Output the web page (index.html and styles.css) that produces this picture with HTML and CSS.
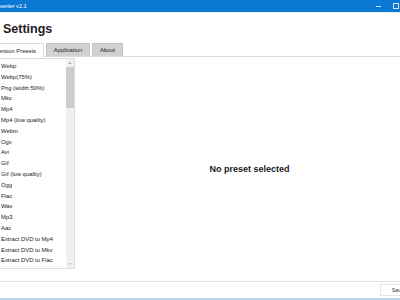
FILE: index.html
```html
<!DOCTYPE html>
<html>
<head>
<meta charset="utf-8">
<link rel="stylesheet" href="styles.css">
</head>
<body>
<div class="window">
  <div class="titlebar">
    <span class="title">Converter v2.1</span>
    <div class="controls">
      <span class="min"></span>
      <span class="max"></span>
      <span class="close"></span>
    </div>
  </div>
  <h1 class="heading">Settings</h1>
  <div class="tabs">
    <div class="tab active">Conversion Presets</div>
    <div class="tab">Application</div>
    <div class="tab">About</div>
  </div>
  <div class="body">
    <div class="listbox">
      <ul class="items">
        <li>Webp</li>
        <li>Webp(75%)</li>
        <li>Png (width:50%)</li>
        <li>Mkv</li>
        <li>Mp4</li>
        <li>Mp4 (low quality)</li>
        <li>Webm</li>
        <li>Ogv</li>
        <li>Avi</li>
        <li>Gif</li>
        <li>Gif (low quality)</li>
        <li>Ogg</li>
        <li>Flac</li>
        <li>Wav</li>
        <li>Mp3</li>
        <li>Aac</li>
        <li>Extract DVD to Mp4</li>
        <li>Extract DVD to Mkv</li>
        <li>Extract DVD to Flac</li>
      </ul>
      <div class="scrollbar">
        <span class="arrow up"></span>
        <span class="thumb"></span>
        <span class="track"></span>
        <span class="arrow down"></span>
      </div>
    </div>
    <div class="detail">No preset selected</div>
  </div>
  <div class="footer">
    <button class="save">Save</button>
  </div>
</div>
</body>
</html>
```
FILE: styles.css
```css
html, body {
  margin: 0;
  padding: 0;
  width: 400px;
  height: 300px;
  overflow: hidden;
  background: #ffffff;
  font-family: "Liberation Sans", Arial, sans-serif;
}
.window {
  width: 438px;
  height: 300px;
  margin-left: -14px;
  display: flex;
  flex-direction: column;
  box-sizing: border-box;
  border-bottom: 2px solid #b8d6ee;
}
.titlebar {
  height: 12px;
  background: #0b78d4;
  color: #ffffff;
  display: flex;
  align-items: center;
  justify-content: space-between;
  flex-shrink: 0;
  border-bottom: 1px solid #e6eef6;
}
.title {
  font-size: 5.6px;
  padding-left: 4px;
}
.controls {
  display: flex;
  align-items: center;
  gap: 12px;
  padding-right: 8px;
}
.min {
  width: 5px;
  height: 1px;
  background: #d8e8f8;
}
.max {
  width: 4px;
  height: 4px;
  border: 1px solid #d8e8f8;
}
.close {
  width: 5px;
  height: 5px;
}
.heading {
  margin: 0;
  padding: 10px 0 0 17px;
  height: 23px;
  box-sizing: border-box;
  font-size: 12.5px;
  font-weight: bold;
  color: #222;
  line-height: 13px;
  flex-shrink: 0;
}
.tabs {
  display: flex;
  gap: 2px;
  margin-top: 7px;
  height: 13px;
  border-bottom: 1px solid #dcdcdc;
  flex-shrink: 0;
}
.tab {
  font-size: 5.8px;
  color: #222;
  background: #d2d2d2;
  border: 1px solid #c4c4c4;
  border-bottom: none;
  padding: 0;
  display: flex;
  align-items: center;
  justify-content: center;
  box-sizing: border-box;
  height: 13px;
  white-space: nowrap;
  overflow: hidden;
}
.tab.active {
  background: #ffffff;
  border-color: #dcdcdc;
  height: 14px;
  margin-bottom: -1px;
  width: 58px;
  justify-content: flex-end;
  padding-right: 7px;
}
.tab:nth-child(2) { width: 44px; }
.tab:nth-child(3) { width: 31px; }
.body {
  flex: 1;
  display: flex;
  min-height: 0;
}
.listbox {
  width: 83px;
  height: 211px;
  margin-top: 1px;
  margin-left: 6px;
  border: 1px solid #dddddd;
  box-sizing: border-box;
  display: flex;
  flex-shrink: 0;
}
.items {
  list-style: none;
  margin: 0;
  padding: 2px 0 0 8px;
  flex: 1;
  overflow: hidden;
}
.items li {
  font-size: 5.9px;
  height: 10.8px;
  line-height: 10.8px;
  color: #222;
  white-space: nowrap;
}
.scrollbar {
  width: 8px;
  background: #f0f0f0;
  display: flex;
  flex-direction: column;
  align-items: center;
}
.arrow {
  width: 0;
  height: 0;
  margin: 3px 0;
  border-left: 2px solid transparent;
  border-right: 2px solid transparent;
}
.arrow.up { border-bottom: 2px solid #b0b0b0; }
.arrow.down { border-top: 2px solid #c8c8c8; }
.thumb {
  width: 8px;
  height: 41px;
  background: #cdcdcd;
}
.track { flex: 1; }
.detail {
  flex: 1;
  display: flex;
  align-items: center;
  justify-content: center;
  font-size: 9px;
  font-weight: bold;
  color: #1a1a1a;
}
.footer {
  height: 16px;
  border-top: 1px solid #e2e2e2;
  display: flex;
  align-items: center;
  justify-content: flex-end;
  flex-shrink: 0;
  padding-right: 8px;
}
.save {
  font-family: "Liberation Sans", Arial, sans-serif;
  font-size: 5.6px;
  color: #333;
  background: #ffffff;
  border: 1px solid #e4e4e4;
  height: 12px;
  width: 36px;
  padding: 0;
}
```
